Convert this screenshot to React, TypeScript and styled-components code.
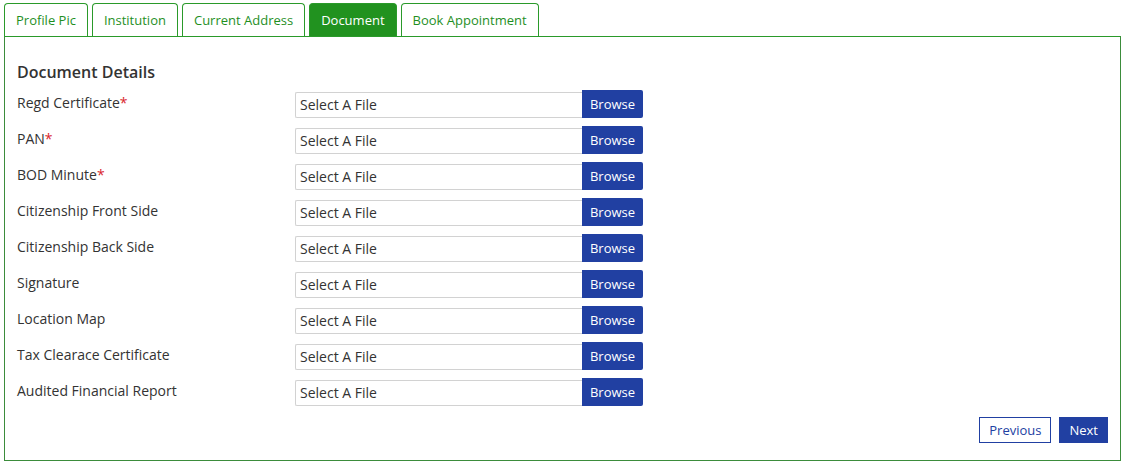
import React from 'react';
import styled, { createGlobalStyle } from 'styled-components';

const GlobalStyle = createGlobalStyle`
    body {
        margin: 0;
        background: #fff;
        font-family: "Open Sans", "Noto Sans", sans-serif;
        color: #333;
    }
`;

const Page = styled.div`
    padding: 3px 4px 0 4px;
    width: 1117px;
`;

const TabBar = styled.div`
    display: flex;
    gap: 4px;
    height: 33px;
`;

const Tab = styled.button<{ $active?: boolean }>`
    height: 33px;
    padding: 0 11px;
    border: 1px solid #2a9a2a;
    border-bottom: none;
    border-radius: 4px 4px 0 0;
    background: ${(p) => (p.$active ? '#21921f' : '#fff')};
    color: ${(p) => (p.$active ? '#fff' : '#1f8f1f')};
    font-family: inherit;
    font-size: 13px;
    cursor: pointer;
`;

const Panel = styled.div`
    border: 1px solid #3b8c3b;
    border-top-color: #2a9a2a;
    padding: 24px 12px 16px 12px;
    height: 425px;
    box-sizing: border-box;
`;

const Heading = styled.h3`
    margin: 0 0 7px 0;
    font-size: 16px;
    font-weight: 600;
    line-height: 22px;
    color: #333;
`;

const Row = styled.div`
    display: grid;
    grid-template-columns: 278px 287px 61px;
    align-items: start;
    height: 36px;
`;

const Label = styled.label`
    font-size: 14px;
    line-height: 20px;
    padding-top: 3px;
    color: #333;
`;

const Required = styled.span`
    color: #d9262c;
`;

const FileInput = styled.div`
    height: 26px;
    margin-top: 2px;
    box-sizing: border-box;
    border: 1px solid #d2d2d2;
    border-right: none;
    border-radius: 2px 0 0 2px;
    padding: 0 4px;
    font-size: 14px;
    line-height: 24px;
    color: #333;
`;

const BrowseButton = styled.button`
    height: 28px;
    border: none;
    border-radius: 0 2px 2px 0;
    background: #2140a2;
    color: #fff;
    font-family: inherit;
    font-size: 13px;
    padding: 0;
`;

const Footer = styled.div`
    display: flex;
    justify-content: flex-end;
    gap: 8px;
    padding-top: 3px;
`;

const NavButton = styled.button<{ $primary?: boolean }>`
    height: 26px;
    padding: 0 9px;
    border: 1px solid #2140a2;
    background: ${(p) => (p.$primary ? '#2140a2' : '#fff')};
    color: ${(p) => (p.$primary ? '#fff' : '#2140a2')};
    font-family: inherit;
    font-size: 13px;
`;

const tabs = ['Profile Pic', 'Institution', 'Current Address', 'Document', 'Book Appointment'];

const documents = [
    { name: 'Regd Certificate', required: true },
    { name: 'PAN', required: true },
    { name: 'BOD Minute', required: true },
    { name: 'Citizenship Front Side' },
    { name: 'Citizenship Back Side' },
    { name: 'Signature' },
    { name: 'Location Map' },
    { name: 'Tax Clearace Certificate' },
    { name: 'Audited Financial Report' },
];

const App: React.FC = () => {
    return (
        <>
            <GlobalStyle />
            <Page>
                <TabBar>
                    {tabs.map((tab) => (
                        <Tab key={tab} $active={tab === 'Document'}>{tab}</Tab>
                    ))}
                </TabBar>
                <Panel>
                    <Heading>Document Details</Heading>
                    {documents.map((doc) => (
                        <Row key={doc.name}>
                            <Label>
                                {doc.name}
                                {doc.required && <Required>*</Required>}
                            </Label>
                            <FileInput>Select A File</FileInput>
                            <BrowseButton>Browse</BrowseButton>
                        </Row>
                    ))}
                    <Footer>
                        <NavButton>Previous</NavButton>
                        <NavButton $primary>Next</NavButton>
                    </Footer>
                </Panel>
            </Page>
        </>
    );
};

export default App;
